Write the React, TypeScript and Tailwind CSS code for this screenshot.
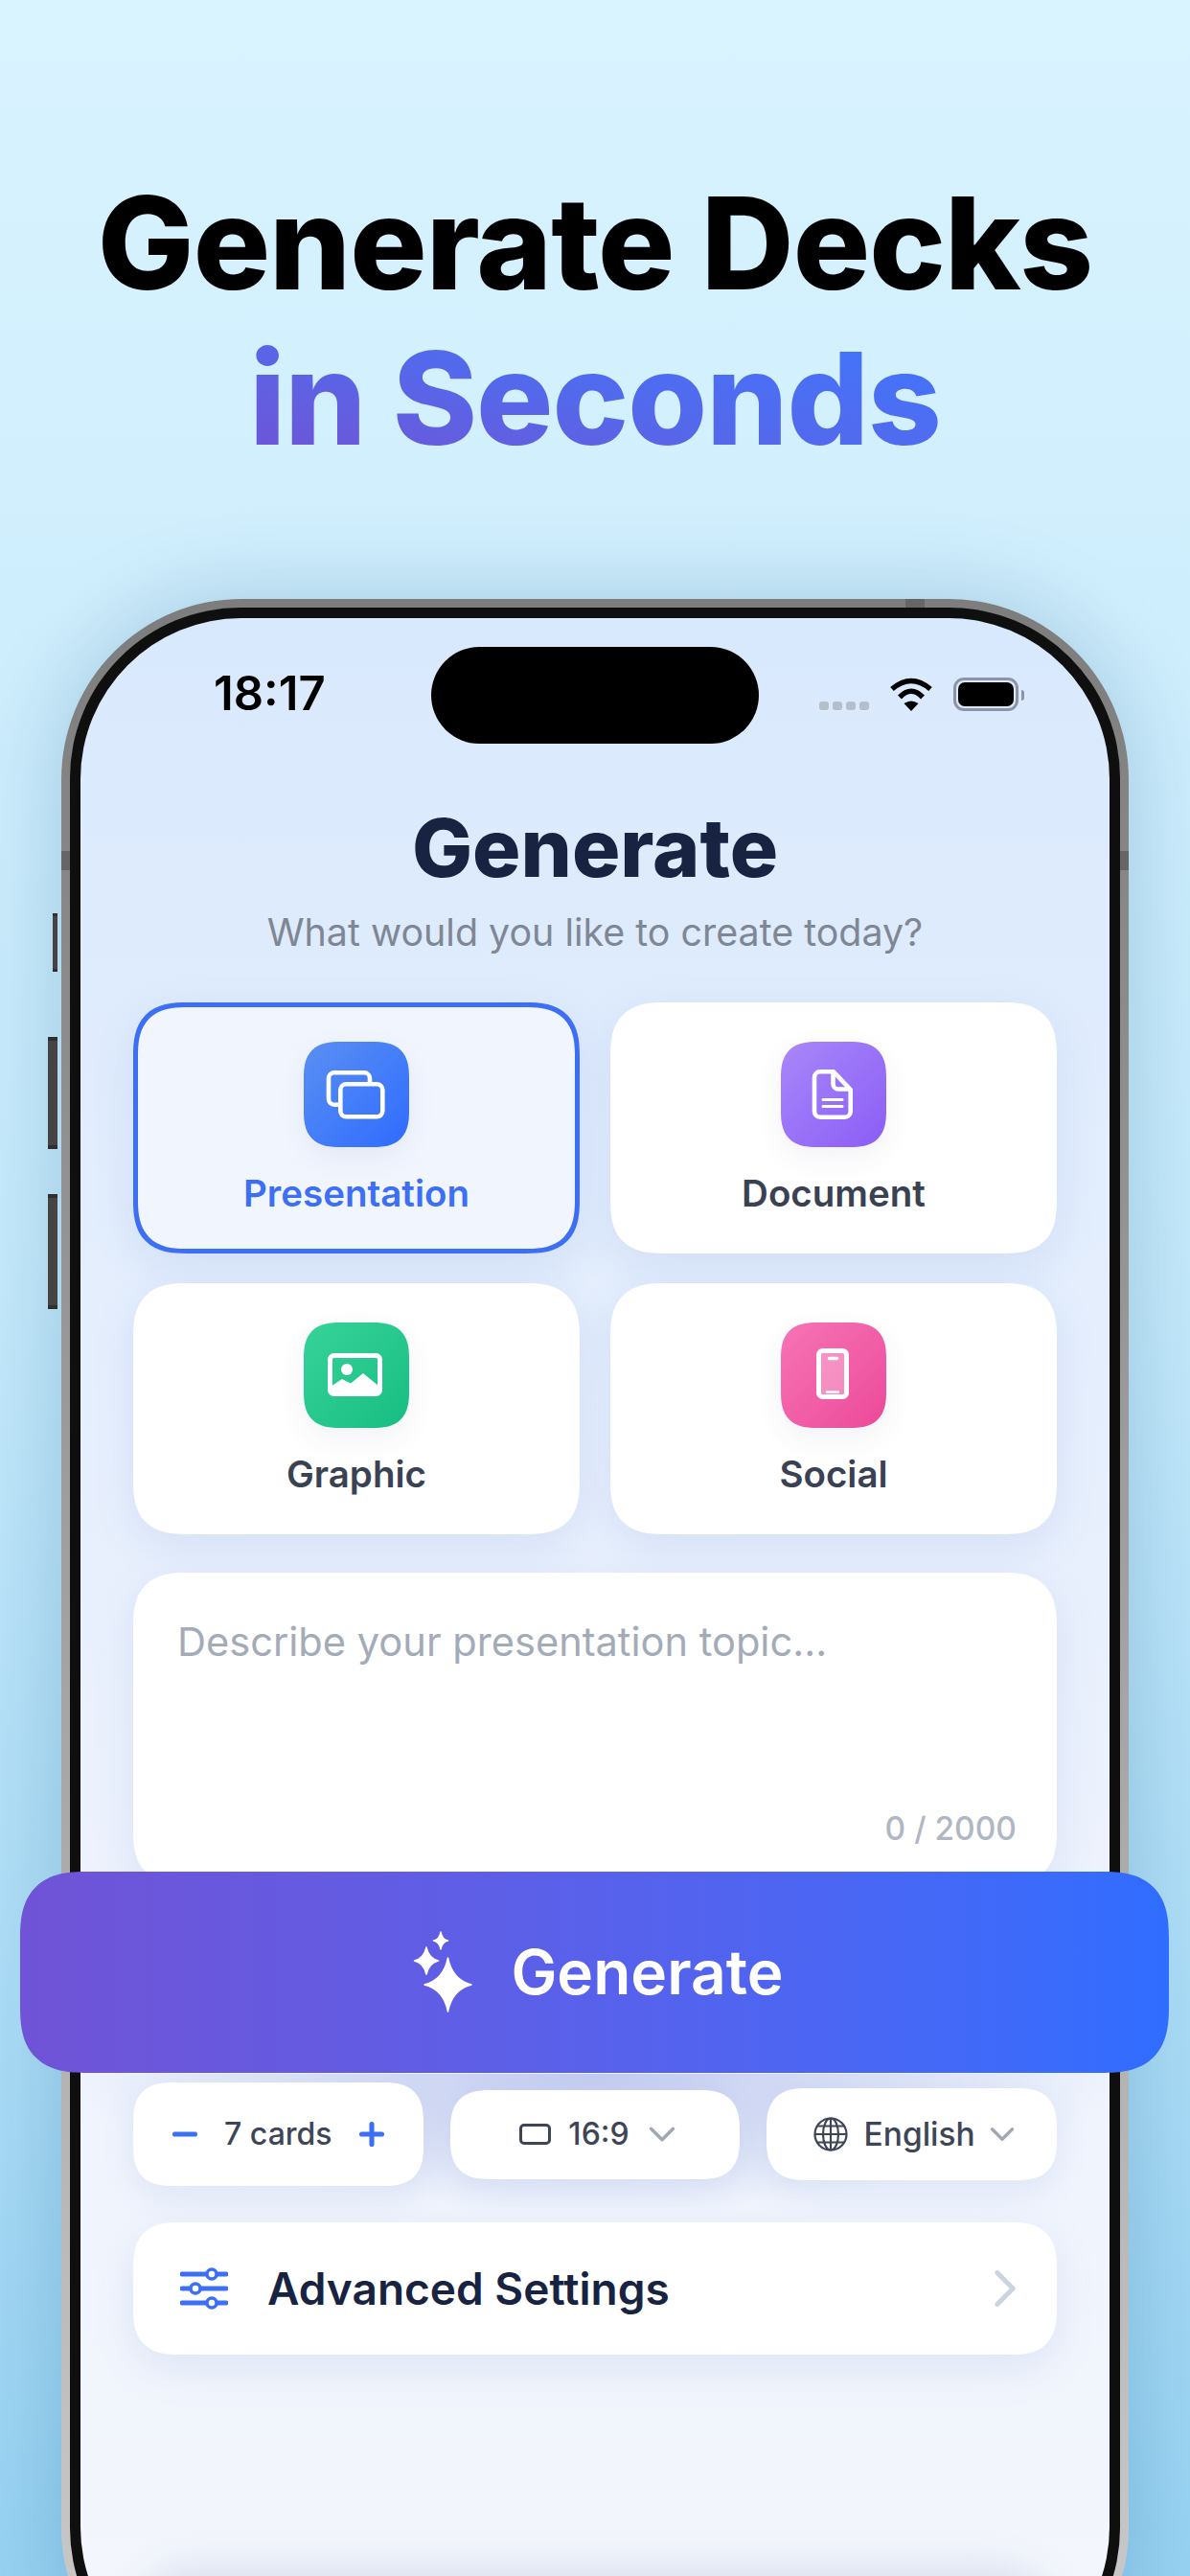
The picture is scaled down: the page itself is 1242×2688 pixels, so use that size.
import { ChevronDown, ChevronRight, Minus, Plus } from 'lucide-react';
import type { ReactNode } from 'react';

const FONT = "font-['Inter','Noto_Sans',sans-serif]";

// === ICONS ===
const PresentationIcon = () => (
  <svg viewBox="0 0 110 110" className="h-full w-full" fill="none" stroke="#fff" strokeWidth="4.6">
    <path d="M36 65.7H32a6 6 0 0 1-6-6V38.3a6 6 0 0 1 6-6H63a6 6 0 0 1 6 6V44" />
    <rect x="38.3" y="44.3" width="44" height="34" rx="6" />
  </svg>
);

const DocumentIcon = () => (
  <svg viewBox="0 0 110 110" className="h-full w-full" fill="none" stroke="#fff" strokeWidth="4.6" strokeLinejoin="round">
    <path d="M41 31.3H55L72.7 50V72.7a6 6 0 0 1-6 6H41a6 6 0 0 1-6-6V37.3a6 6 0 0 1 6-6Z" />
    <path d="M54.5 32V44a5.5 5.5 0 0 0 5.5 5.5H72" />
    <path d="M44 60.5H64M44 67.5H64" strokeWidth="3" strokeLinecap="round" />
  </svg>
);

const GraphicIcon = () => (
  <svg viewBox="0 0 110 110" className="h-full w-full" fill="none">
    <rect x="27.5" y="34.5" width="52" height="40" rx="4" stroke="#fff" strokeWidth="5" />
    <circle cx="45" cy="49" r="6" fill="#fff" />
    <path d="M28 67L40 59L49 63.5L62 53L78 66V75H28Z" fill="#fff" />
  </svg>
);

const SocialIcon = () => (
  <svg viewBox="0 0 110 110" className="h-full w-full" fill="none">
    <rect x="39.5" y="29.5" width="29" height="48" rx="4" fill="#fff" fillOpacity="0.3" stroke="#fff" strokeWidth="5" />
    <path d="M50.5 37.5H58.5" stroke="#fff" strokeWidth="3.4" strokeLinecap="round" />
    <path d="M48 72.5H60" stroke="#fff" strokeWidth="2.4" strokeLinecap="round" />
  </svg>
);

const Sparkles = () => (
  <svg viewBox="0 0 64 86" className="h-[86px] w-[64px]" fill="#fff" stroke="#fff" strokeWidth="1.5" strokeLinejoin="round">
    <path d="M36.5 28Q41 51 61 56Q41 61 36.5 84Q32 61 12 56Q32 51 36.5 28Z" />
    <path d="M14 17Q16.5 28.5 26.5 31Q16.5 33.5 14 45Q11.5 33.5 1.5 31Q11.5 28.5 14 17Z" />
    <path d="M29 1Q30.3 8.7 36.5 10Q30.3 11.3 29 19Q27.7 11.3 21.5 10Q27.7 8.7 29 1Z" />
  </svg>
);

const Globe = () => (
  <svg viewBox="0 0 36 36" className="h-[36px] w-[36px]" fill="none" stroke="#3d4556" strokeWidth="2.2">
    <circle cx="18" cy="18" r="16.5" />
    <ellipse cx="18" cy="18" rx="8" ry="16.5" />
    <path d="M18 1.5V34.5M1.5 18H34.5M4 9.5H32M4 26.5H32" />
  </svg>
);

const SlidersIcon = () => (
  <svg viewBox="0 0 50 46" className="h-[46px] w-[50px]" fill="none" stroke="#3d6ff5">
    <path d="M2 8H48M2 23H48M2 38H48" strokeWidth="5" strokeLinecap="round" />
    <circle cx="33" cy="8" r="5" fill="#fff" strokeWidth="3.5" />
    <circle cx="16" cy="23" r="5" fill="#fff" strokeWidth="3.5" />
    <circle cx="33" cy="38" r="5" fill="#fff" strokeWidth="3.5" />
  </svg>
);

const Wifi = () => (
  <svg viewBox="0 0 46 35" className="h-[35px] w-[46px]" fill="none" stroke="#000" strokeWidth="5.5">
    <path d="M3 12Q23 -5 43 12" />
    <path d="M11 20.5Q23 8 35 20.5" />
    <path d="M23 35L15.5 27Q23 22 30.5 27Z" fill="#000" stroke="none" />
  </svg>
);

// === PIECES ===
function TypeCard({ label, icon, tile, selected }: { label: string; icon: ReactNode; tile: string; selected?: boolean }) {
  return (
    <div
      className={`flex h-[262px] flex-col items-center rounded-[56px] shadow-[0_14px_44px_rgba(90,120,200,0.13)] [corner-shape:superellipse(1.4)] ${
        selected ? 'border-[5px] border-[#3d6ff5] bg-[#f1f5fe] pt-[36px]' : 'bg-white pt-[41px]'
      }`}
    >
      <div className={`h-[110px] w-[110px] rounded-[38px] shadow-[0_10px_30px_rgba(60,70,110,0.07)] [corner-shape:superellipse(1.4)] ${tile}`}>{icon}</div>
      <span className={`mt-[24.5px] text-[38.5px] leading-[46px] font-semibold ${selected ? 'text-[#3d6ff5]' : 'text-[#3a4153]'}`}>{label}</span>
    </div>
  );
}

function Pill({ children, className }: { children: ReactNode; className: string }) {
  return (
    <div className={`flex items-center rounded-[42px] bg-white text-[32px] font-medium text-[#3d4556] shadow-[0_10px_34px_rgba(90,120,200,0.12)] [corner-shape:superellipse(1.4)] ${className}`}>
      {children}
    </div>
  );
}

export default function App() {
  return (
    <div className={`relative h-[2688px] w-[1242px] overflow-hidden bg-gradient-to-b from-[#d9f3ff] via-[#c4e9fb] to-[#97d2f2] ${FONT}`}>
      {/* === HEADLINE === */}
      <h1 className="pt-[172px] text-center text-[134px] leading-[162px] font-extrabold tracking-[-1px] text-black">
        <div>Generate Decks</div>
        <div className="inline-block bg-gradient-to-tr from-[#7050d2] via-[#5369ec] to-[#3a77ff] bg-clip-text text-transparent">in Seconds</div>
      </h1>

      {/* === PHONE === */}
      <div className="relative mx-auto mt-[129px] h-[2200px] w-[1114px] rounded-[188px] bg-gradient-to-b from-[#7d7d7d] via-[#a3a3a3] to-[#cccccc] p-[9px] shadow-[0_0_90px_rgba(0,70,120,0.22)]">
        {/* side buttons and antenna bands */}
        <div className="absolute top-[328px] -left-[9px] h-[61px] w-[5px] border-y-[3px] border-[#2f2f2f] bg-[#454343]" />
        <div className="absolute top-[457px] -left-[14px] h-[117px] w-[10px] border-y-[4px] border-[#2f2f2f] bg-[#454343]" />
        <div className="absolute top-[621px] -left-[14px] h-[120px] w-[10px] border-y-[4px] border-[#2f2f2f] bg-[#454343]" />
        <div className="absolute top-0 left-[881px] h-[9px] w-[20px] bg-[#666]" />
        <div className="absolute top-[263px] left-0 h-[20px] w-[9px] bg-[#666]" />
        <div className="absolute top-[263px] right-0 h-[20px] w-[9px] bg-[#666]" />

        <div className="h-full rounded-[178px] bg-[#0e0f0e] p-[11px]">
          <div className="h-full rounded-[168px] bg-gradient-to-b from-[#d9e9fd] via-[#edf2fd] via-[60%] to-[#f4f7fc] px-[55px]">
            {/* === STATUS BAR === */}
            <div className="-mx-[55px] grid grid-cols-[366px_342px_1fr] pt-[30px]">
              <span className="pt-[22px] pl-[139px] text-[49px] leading-[54px] font-semibold text-black">18:17</span>
              <div className="h-[101px] rounded-full bg-black" />
              <div className="flex h-[67px] items-end pl-[63px]">
                <div className="mb-px flex gap-[4.5px]">
                  <div className="h-[9px] w-[9.5px] rounded-[3px] bg-[#b5bfcc]" />
                  <div className="h-[9px] w-[9.5px] rounded-[3px] bg-[#b5bfcc]" />
                  <div className="h-[9px] w-[9.5px] rounded-[3px] bg-[#b5bfcc]" />
                  <div className="h-[9px] w-[9.5px] rounded-[3px] bg-[#b5bfcc]" />
                </div>
                <div className="ml-[21px]"><Wifi /></div>
                <div className="ml-[21px] h-[35px] w-[68px] rounded-[11px] border-[3px] border-[#8c94a6] p-[2px]">
                  <div className="h-full w-full rounded-[7px] bg-black" />
                </div>
                <div className="mb-[11px] ml-[3px] h-[11px] w-[3px] rounded-r-full bg-[#8c94a6]" />
              </div>
            </div>

            {/* === TITLE === */}
            <h2 className="mt-[61px] text-center text-[84px] leading-[96px] font-extrabold text-[#172340]">Generate</h2>
            <p className="mt-[16px] text-center text-[39.4px] leading-[48px] text-[#7f8794]">What would you like to create today?</p>

            {/* === TYPE CARDS === */}
            <div className="mt-[49px] grid grid-cols-2 gap-x-[32px] gap-y-[31px]">
              <TypeCard label="Presentation" selected tile="bg-gradient-to-br from-[#5a8ff2] to-[#2f6bff]" icon={<PresentationIcon />} />
              <TypeCard label="Document" tile="bg-gradient-to-br from-[#a987f9] to-[#8b5cf6]" icon={<DocumentIcon />} />
              <TypeCard label="Graphic" tile="bg-gradient-to-br from-[#36d399] to-[#14bd82]" icon={<GraphicIcon />} />
              <TypeCard label="Social" tile="bg-gradient-to-br from-[#f674b6] to-[#ec4899]" icon={<SocialIcon />} />
            </div>

            {/* === PROMPT === */}
            <div className="relative mt-[40px] h-[325px] rounded-[56px] bg-white px-[46px] pt-[48px] shadow-[0_14px_44px_rgba(90,120,200,0.13)] [corner-shape:superellipse(1.4)]">
              <p className="text-[41.6px] leading-[48px] text-[#a3abb8]">Describe your presentation topic...</p>
              <span className="absolute top-[247px] right-[42px] text-[33.5px] leading-[40px] font-medium text-[#b0b7c2]">0 / 2000</span>
            </div>

            {/* === OPTIONS === */}
            <div className="relative mt-[207px]">
              {/* the button's shadow, which only falls on the screen */}
              <div className="absolute -top-[9px] -right-[55px] -left-[55px] h-[140px] bg-[radial-gradient(ellipse_at_top,#c2ccf0,transparent_72%)]" />
              <div className="relative grid grid-cols-3 items-center gap-[28px]">
                <Pill className="h-[108px] justify-between px-[36px]">
                  <Minus className="h-[36px] w-[36px] text-[#3d6ff5]" strokeWidth={3.4} />
                  <span>7 cards</span>
                  <Plus className="h-[36px] w-[36px] text-[#3d6ff5]" strokeWidth={3.4} />
                </Pill>
                <Pill className="h-[93px] justify-center pl-[14px]">
                  <div className="h-[22px] w-[33px] rounded-[5px] border-[3.5px] border-[#3d4556]" />
                  <span className="ml-[18px]">16:9</span>
                  <ChevronDown className="ml-[11px] h-[46px] w-[46px] text-[#a0a8b5]" strokeWidth={1.8} />
                </Pill>
                <Pill className="h-[96px] justify-center pl-[12px]">
                  <Globe />
                  <span className="ml-[17px] text-[33.5px]">English</span>
                  <ChevronDown className="ml-[7px] h-[42px] w-[42px] text-[#a0a8b5]" strokeWidth={1.9} />
                </Pill>
              </div>
            </div>

            {/* === ADVANCED === */}
            <div className="mt-[38px] flex h-[138px] items-center rounded-[48px] bg-white pr-[21px] pl-[49px] shadow-[0_14px_44px_rgba(90,120,200,0.13)] [corner-shape:superellipse(1.4)]">
              <SlidersIcon />
              <span className="ml-[41px] flex-1 text-[46px] font-semibold text-[#172340]">Advanced Settings</span>
              <ChevronRight className="h-[66px] w-[66px] text-[#cbd3de]" strokeWidth={1.8} />
            </div>

            {/* top edge of the next panel, just peeking in at the page bottom */}
            <div className="mt-[231px] h-[100px] rounded-t-[66px] bg-white shadow-[0_-10px_40px_rgba(90,110,170,0.16)]" />
          </div>
        </div>
      </div>

      {/* === GENERATE BUTTON (hangs over the phone) === */}
      <div className="absolute top-[1953px] left-[21px] flex h-[210px] w-[1199px] items-center justify-center rounded-[70px] bg-gradient-to-r from-[#7053d6] to-[#2f6dff] pl-[8px] [corner-shape:superellipse(1.4)]">
        <Sparkles />
        <span className="ml-[38px] text-[64px] leading-none font-semibold text-white">Generate</span>
      </div>
    </div>
  );
}
